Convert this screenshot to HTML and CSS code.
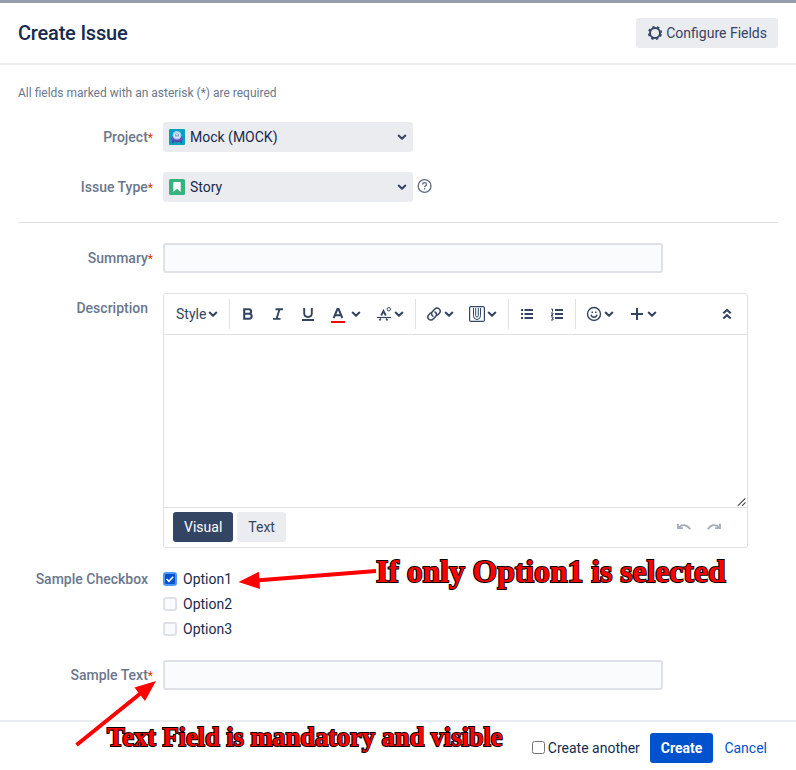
FILE: index.html
```html
<!DOCTYPE html>
<html lang="en">
<head>
<meta charset="utf-8">
<title>Create Issue</title>
<link rel="stylesheet" href="styles.css">
</head>
<body>
<svg class="defs" width="0" height="0" aria-hidden="true">
  <symbol id="chev" viewBox="0 0 10 10"><path d="M1.700 3.600 5 6.700l3.300-3.100" fill="none" stroke="currentColor" stroke-width="2.100" stroke-linecap="round" stroke-linejoin="round"/></symbol>
</svg>
<div class="dialog">
  <header class="head">
    <h1>Create Issue</h1>
    <button class="btn configure">
      <svg width="16" height="16" viewBox="0 0 16 16"><circle cx="8" cy="8" r="5" fill="none" stroke="currentColor" stroke-width="2"/><circle cx="8" cy="8" r="6.300" fill="none" stroke="currentColor" stroke-width="1.600" stroke-dasharray="2.400 2.548" stroke-dashoffset="-1.300"/></svg>
      <span>Configure Fields</span>
    </button>
  </header>
  <main class="body">
    <p class="note">All fields marked with an asterisk (*) are required</p>
    <div class="row project">
      <label>Project<i>*</i></label>
      <div class="select">
        <svg width="16" height="16" viewBox="0 0 16 16"><rect width="16" height="16" rx="1" fill="#00a3bf"/><path d="M4.200 12 3.500 14M11.800 12l.7 2" stroke="#403294" stroke-width="1.300"/><ellipse cx="8" cy="9.800" rx="6" ry="3.200" fill="#6554c0"/><path d="M3.200 11.500h9.600q-2 1.800-4.800 1.800t-4.800-1.800" fill="#5243aa"/><circle cx="8" cy="6.300" r="4.300" fill="#b3cdf3"/><circle cx="8" cy="6.300" r="2.900" fill="#e6f0ff"/><circle cx="8" cy="6.300" r="2" fill="#6c9bd8"/><path d="M7 5.500h2M7 7.100h2" stroke="#fff" stroke-width=".7"/></svg>
        <span>Mock (MOCK)</span>
        <svg class="caret" width="10" height="10"><use href="#chev"/></svg>
      </div>
    </div>
    <div class="row type">
      <label>Issue Type<i>*</i></label>
      <div class="select">
        <svg width="16" height="16" viewBox="0 0 16 16"><rect width="16" height="16" rx="1.500" fill="#36b37e"/><path d="M4.300 3.700q0-.7.700-.7h6q.7 0 .7.700V13L8 9.700 4.300 13z" fill="#fff"/></svg>
        <span>Story</span>
        <svg class="caret" width="10" height="10"><use href="#chev"/></svg>
      </div>
      <svg class="help" width="16" height="16" viewBox="0 0 16 16" fill="none" stroke="#5e6c84"><circle cx="7.600" cy="8" r="6.400" stroke-width="1.300"/><path d="M5.700 6.500Q5.700 4.700 7.600 4.700T9.500 6.400Q9.500 7.300 8.500 7.800 7.600 8.300 7.600 9.300" stroke-width="1.300"/><path d="M7.600 10.200v1.400" stroke-width="1.400"/></svg>
    </div>
    <hr>
    <div class="row summary">
      <label>Summary<i>*</i></label>
      <input class="text" type="text">
    </div>
    <div class="row desc">
      <label>Description</label>
      <div class="editor">
        <div class="tools">
          <div class="group style"><span>Style</span><svg width="10" height="10"><use href="#chev"/></svg></div>
          <div class="group simple">
            <svg width="16" height="16" viewBox="0 0 16 16"><path d="M4.200 3.200h4.600a2.250 2.250 0 0 1 0 4.600H4.200zM4.200 7.800h5a2.450 2.450 0 0 1 0 5H4.200z" fill="none" stroke="currentColor" stroke-width="2.100"/></svg>
            <svg width="16" height="16" viewBox="0 0 16 16"><path d="M5.500 3.200H13M3 12.900h7.500M9.600 3 6.500 13" fill="none" stroke="currentColor" stroke-width="1.900"/></svg>
            <svg width="16" height="16" viewBox="0 0 16 16"><path d="M4.200 2v5.300Q4.200 11 8 11t3.800-3.700V2M2 14h12" fill="none" stroke="currentColor" stroke-width="1.900"/></svg>
            <svg width="16" height="18" viewBox="0 0 16 18"><path d="M3.700 13 7.400 4h1.200l3.700 9M5.200 10.200h5.600" fill="none" stroke="currentColor" stroke-width="2"/><path d="M1 17h14" stroke="#f00" stroke-width="2"/></svg>
            <svg class="color-caret" width="10" height="10"><use href="#chev"/></svg>
          </div>
          <div class="group format"><div class="drop">
            <svg width="16" height="16" viewBox="0 0 16 16" fill="none" stroke="currentColor"><path d="M5.200 9.500 7.500 5 9.800 9.500" stroke-width="1.800"/><path d="M1 11.500h14" stroke-width="1.200"/><path d="m4.800 12.500-1.300 2M10.200 12.500l1.300 2" stroke-width="1.600"/><circle cx="12.800" cy="3.200" r="1.700" stroke-width="1"/></svg>
            <svg width="10" height="10"><use href="#chev"/></svg></div>
          </div>
          <div class="group inserts">
            <div class="drop">
              <svg width="16" height="16" viewBox="0 0 16 16" fill="none" stroke="currentColor" stroke-width="1.500" stroke-linecap="round"><path d="M7 10.200a3 3 0 0 1-.7-4.500l2.500-2.600a3 3 0 0 1 4.500 4.200l-1.700 1.800"/><path d="M9 6a3 3 0 0 1 .7 4.500l-2.500 2.600a3 3 0 0 1-4.500-4.200l1.700-1.800"/></svg>
              <svg width="10" height="10"><use href="#chev"/></svg>
            </div>
            <div class="drop">
              <svg width="16" height="16" viewBox="0 0 16 16" fill="none" stroke="currentColor"><rect x=".6" y=".6" width="14.800" height="14.800" rx="1.500" stroke-width="1.200"/><path d="M4.500 2v7.700Q4.500 13.500 8 13.500t3.500-3.800V2M9.300 2v7.500Q9.300 11 8 11T6.700 9.500V2" stroke-width="1"/></svg>
              <svg width="10" height="10"><use href="#chev"/></svg>
            </div>
          </div>
          <div class="group lists">
            <svg width="16" height="16" viewBox="0 0 16 16" fill="none" stroke="currentColor" stroke-width="1.800"><path d="M5.500 4H14M5.500 8H14M5.500 12H14M2 4h2M2 8h2M2 12h2"/></svg>
            <svg width="16" height="16" viewBox="0 0 16 16" fill="none" stroke="currentColor"><path d="M6 4h8M6 8h8M6 12h8" stroke-width="1.800"/><path d="M2.200 3H3.500v2.700M2 7h2v1.200L2 9.300h2.200M2 10.900h2v1.400H3M4 12.300v1.700H2" stroke-width="1"/></svg>
          </div>
          <div class="group more">
            <div class="drop">
              <svg width="16" height="16" viewBox="0 0 16 16" fill="none" stroke="currentColor"><circle cx="8" cy="8" r="6.500" stroke-width="1.400"/><path d="M5 8.800q.7 2.400 3 2.400T11 8.800" stroke-width="1.400"/><path d="M6.200 5.400v1.700M9.800 5.400v1.700" stroke-width="1.500"/></svg>
              <svg width="10" height="10"><use href="#chev"/></svg>
            </div>
            <div class="drop">
              <svg width="16" height="16" viewBox="0 0 16 16"><path d="M8 2v12M2 8h12" stroke="currentColor" stroke-width="2"/></svg>
              <svg width="10" height="10"><use href="#chev"/></svg>
            </div>
          </div>
          <svg class="collapse" width="16" height="16" viewBox="0 0 16 16"><path d="M4.300 7.200 8 3.900l3.700 3.300M4.300 12.500 8 9.200l3.700 3.300" fill="none" stroke="currentColor" stroke-width="2"/></svg>
        </div>
        <div class="canvas">
          <svg width="10" height="10" viewBox="0 0 10 10"><path d="M.8 8.800 8.300 1.300M5 8.800l3.500-3.500" stroke="#444" stroke-width="1.100"/></svg>
        </div>
        <div class="modes">
          <button class="btn active">Visual</button>
          <button class="btn">Text</button>
          <div class="history">
            <svg width="16" height="12" viewBox="0 0 16 12" fill="none" stroke="#a5adba"><path d="M3 6.200Q9 1.200 14.300 8.200" stroke-width="1.800"/><path d="M2 2.800v4.400h5" stroke-width="1.800"/></svg>
            <svg width="16" height="12" viewBox="0 0 16 12" fill="none" stroke="#a5adba"><path d="M13 6.200Q7 1.200 1.700 8.200" stroke-width="1.800"/><path d="M14 2.800v4.400H9" stroke-width="1.800"/></svg>
          </div>
        </div>
      </div>
    </div>
    <div class="row checks">
      <label>Sample Checkbox</label>
      <div class="options">
        <div class="option"><span class="box on"><svg width="10" height="10" viewBox="0 0 10 10"><path d="m1.600 5 2.300 2.300 4.300-4.600" fill="none" stroke="#fff" stroke-width="1.600"/></svg></span>Option1</div>
        <div class="option"><span class="box"></span>Option2</div>
        <div class="option"><span class="box"></span>Option3</div>
      </div>
    </div>
    <div class="row sample">
      <label>Sample Text<i>*</i></label>
      <input class="text" type="text">
    </div>
  </main>
  <footer class="foot">
    <input class="another" id="another" type="checkbox"><label for="another">Create another</label>
    <button class="btn primary">Create</button>
    <a>Cancel</a>
  </footer>
</div>
<svg class="callouts" width="796" height="770" viewBox="0 0 796 770">
  <g stroke="#f00" stroke-width="4"><path d="M376 571 256 580.500"/><path d="M76.500 745 141 693"/></g>
  <g fill="#f00"><path d="M238.500 582 259 571.700 260 589z"/><path d="M156 681 134.500 687.500 145 701z"/></g>
  <g class="callout-text">
    <text x="376" y="582" font-size="32" textLength="349.500" lengthAdjust="spacingAndGlyphs">If only Option1 is selected</text>
    <text x="107" y="746" font-size="26.500" textLength="395.500" lengthAdjust="spacingAndGlyphs">Text Field is mandatory and visible</text>
  </g>
</svg>
</body>
</html>
```
FILE: styles.css
```css
* { box-sizing: border-box; }
body {
  margin: 0;
  width: 796px;
  height: 770px;
  overflow: hidden;
  position: relative;
  background: #fff;
  color: #172b4d;
  font: 14px/20px Roboto, sans-serif;
}
.defs { position: absolute; }
svg { display: block; flex: none; }
.dialog { display: flex; flex-direction: column; height: 770px; border-top: 3px solid #959daa; }
.head {
  height: 62px;
  padding: 0 18px;
  display: flex;
  align-items: center;
  justify-content: space-between;
  border-bottom: 2px solid #ebecf0;
}
h1 { margin: 0; font-size: 20px; font-weight: 500; line-height: 24px; letter-spacing: -0.2px; }
.btn {
  height: 30px;
  padding: 0 11px;
  border: 0;
  border-radius: 3px;
  background: #ebecf0;
  color: #344563;
  font: 14px/20px Roboto, sans-serif;
}
.configure { display: flex; align-items: center; gap: 3px; }
.body { flex: 1; padding: 18px 18px 0; }
.note { margin: 0; font-size: 12px; color: #6b778c; }
.row { display: flex; align-items: flex-start; }
.row > label {
  width: 130px;
  margin: 5px 15px 0 0;
  flex: none;
  text-align: right;
  white-space: nowrap;
  color: #6b778c;
  font-weight: 500;
}
.row label i { font-style: normal; font-size: 12px; color: #de350b; margin-right: -5px; font-weight: 400; }
.project { margin-top: 19px; }
.type { margin-top: 20px; }
.select {
  width: 250px;
  height: 30px;
  padding: 0 6px;
  display: flex;
  align-items: center;
  gap: 5px;
  border-radius: 3px;
  background: #ebecf0;
}
.caret { margin-left: auto; color: #344563; }
.help { margin: 6px 0 0 4px; }
hr { height: 1px; margin: 20px 0; border: 0; background: #dfe1e6; }
.text {
  width: 500px;
  height: 30px;
  border: 2px solid #dfe1e6;
  border-radius: 3px;
  background: #fafbfc;
}
.desc { margin-top: 20px; }
.editor { width: 585px; height: 255px; border: 1px solid #dfe1e6; border-radius: 3px; color: #344563; }
.tools { height: 41px; display: flex; align-items: center; border-bottom: 1px solid #dfe1e6; }
.group { height: 30px; display: flex; align-items: center; border-right: 1px solid #dfe1e6; }
.style { width: 66px; padding-left: 12px; gap: 2px; }
.simple { width: 138px; padding-left: 10px; gap: 14px; border: 0; }
.color-caret { margin-left: -9px; }
.drop { display: flex; align-items: center; gap: 2px; }
.format { width: 48px; padding-left: 8px; }
.inserts { width: 93px; padding-left: 10px; gap: 15px; }
.lists { width: 67px; padding-left: 10px; gap: 14px; }
.more { padding-left: 10px; gap: 15px; border: 0; }
.collapse { margin: 0 12px 0 auto; }
.canvas { height: 173px; display: flex; align-items: flex-end; justify-content: flex-end; border-bottom: 1px solid #dfe1e6; }
.modes { height: 38px; padding: 0 25px 0 9px; display: flex; align-items: center; gap: 4px; }
.active { background: #344563; color: #fff; }
.history { display: flex; gap: 14px; margin-left: auto; }
.checks { margin-top: 16px; }
.options { margin-top: 5px; }
.option { height: 25px; display: flex; align-items: flex-start; gap: 6px; }
.box { width: 14px; height: 14px; margin-top: 3px; border: 2px solid #dfe1e6; border-radius: 3px; background: #fafbfc; }
.on { border-color: #4c9aff; background: #0052cc; }
.sample { margin-top: 16px; }
.foot {
  height: 50px;
  padding: 3px 18px 0 0;
  display: flex;
  align-items: center;
  justify-content: flex-end;
  border-top: 2px solid #ebecf0;
}
.another { width: 13px; height: 13px; margin: 0 3px 0 0; }
.primary { background: #0052cc; color: #fff; font-weight: 700; margin: 0 11px 0 10px; }
.foot a { color: #0052cc; margin-right: 11px; }
.callouts { position: absolute; left: 0; top: 0; pointer-events: none; }
.callout-text { font-family: "Liberation Serif", serif; font-weight: 700; fill: #f00; stroke: #000; stroke-width: 2px; paint-order: stroke; }
```
